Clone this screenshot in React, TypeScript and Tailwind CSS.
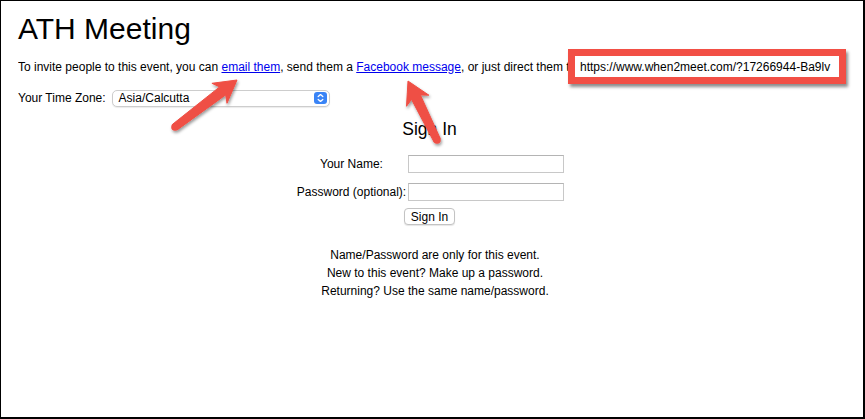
import React from 'react';

// skitch-style annotation arrow, tail -> tip
const arrowPoints = (x1: number, y1: number, x2: number, y2: number) => {
    const dx = x2 - x1;
    const dy = y2 - y1;
    const len = Math.hypot(dx, dy);
    const ux = dx / len;
    const uy = dy / len;
    const nx = -uy;
    const ny = ux;
    const headLen = 22;
    const headHalf = 12.5;
    const p = (a: number, b: number) => `${(x1 + ux * a + nx * b).toFixed(1)},${(y1 + uy * a + ny * b).toFixed(1)}`;
    return [
        p(0, 3.6),
        p(len - headLen + 4, 5),
        p(len - headLen, headHalf),
        p(len, 0),
        p(len - headLen, -headHalf),
        p(len - headLen + 4, -5),
        p(0, -3.6),
    ].join(' ');
};

const Arrow = ({ x1, y1, x2, y2 }: { x1: number; y1: number; x2: number; y2: number }) => (
    <g fill="#ef4f45" filter="url(#arrowShadow)">
        <polygon points={arrowPoints(x1, y1, x2, y2)} strokeLinejoin="round" stroke="#ef4f45" strokeWidth={1} />
        <circle cx={x1} cy={y1} r={3.8} />
    </g>
);

const App: React.FC = () => {
    return (
        <div className="relative w-[865px] h-[419px] border-l border-t border-r-2 border-b-2 border-black bg-white pl-[17px] pr-[22px] overflow-hidden text-[12px] text-black font-['Liberation_Sans',Arial,sans-serif]">
            <h1 className="mt-[11px] text-[30px] leading-[34px] font-normal">ATH Meeting</h1>

            <div className="mt-[10px] flex items-center">
                <span className="w-[557px] shrink-0 overflow-hidden whitespace-nowrap leading-[18px]">
                    To invite people to this event, you can{' '}
                    <a href="#" className="text-[#0000ee] underline">email them</a>, send them a{' '}
                    <a href="#" className="text-[#0000ee] underline">Facebook message</a>, or just direct them to:
                </span>
                <div className="relative">
                    <input
                        readOnly
                        value="https://www.when2meet.com/?17266944-Ba9lv"
                        className="block w-[264px] h-[21px] pl-[5px] bg-white text-[12px] text-black outline-none"
                    />
                    <div className="absolute -inset-[7px] border-[7px] border-[#f24f45] shadow-[2px_3px_3px_rgba(0,0,0,0.45)] pointer-events-none" />
                </div>
            </div>

            <div className="mt-[12px] flex items-center gap-[6px]">
                <span className="leading-[18px]">Your Time Zone:</span>
                <div className="flex items-center justify-between w-[218px] h-[17px] rounded-[5px] border border-[#cdcdcd] bg-white shadow-[0_1px_1px_rgba(0,0,0,0.08)] pl-[6px] pr-[2px]">
                    <span className="leading-none">Asia/Calcutta</span>
                    <svg width="13" height="12" viewBox="0 0 13 12">
                        <rect x="0" y="0" width="13" height="12" rx="3" fill="#3a84f6" />
                        <path d="M4.2 4.6 L6.5 2.6 L8.8 4.6 M4.2 7.4 L6.5 9.4 L8.8 7.4" fill="none" stroke="#fff" strokeWidth="1.3" strokeLinecap="round" strokeLinejoin="round" />
                    </svg>
                </div>
            </div>

            <h2 className="mt-[11px] text-center text-[17.5px] leading-[22px] font-normal">Sign In</h2>

            <div className="mx-auto mt-[15px] w-fit grid grid-cols-[112px_156px] gap-y-[10px] items-center">
                <span className="text-center leading-[18px]">Your Name:</span>
                <input className="h-[18px] border border-[#c8c8c8] border-t-[#b4b4b4] bg-white outline-none" />
                <span className="text-center leading-[18px] whitespace-nowrap">Password (optional):</span>
                <input type="password" className="h-[18px] border border-[#c8c8c8] border-t-[#b4b4b4] bg-white outline-none" />
            </div>
            <button className="mx-auto mt-[7px] block w-[51px] h-[17px] rounded-[4px] border border-[#c3c3c3] bg-white text-[12px] leading-none shadow-[0_1px_1px_rgba(0,0,0,0.1)]">
                Sign In
            </button>

            <div className="mt-[21px] pl-[11px] text-center leading-[18px]">
                <p>Name/Password are only for this event.</p>
                <p>New to this event? Make up a password.</p>
                <p>Returning? Use the same name/password.</p>
            </div>

            <svg className="absolute -left-px -top-px pointer-events-none" width="865" height="419" viewBox="0 0 865 419">
                <defs>
                    <filter id="arrowShadow" x="-20%" y="-20%" width="140%" height="140%">
                        <feDropShadow dx="1" dy="2" stdDeviation="1.5" floodColor="#000" floodOpacity="0.4" />
                    </filter>
                </defs>
                <Arrow x1={175} y1={127} x2={237} y2={80} />
                <Arrow x1={437} y1={140} x2={408} y2={81} />
            </svg>
        </div>
    );
};

export default App;
